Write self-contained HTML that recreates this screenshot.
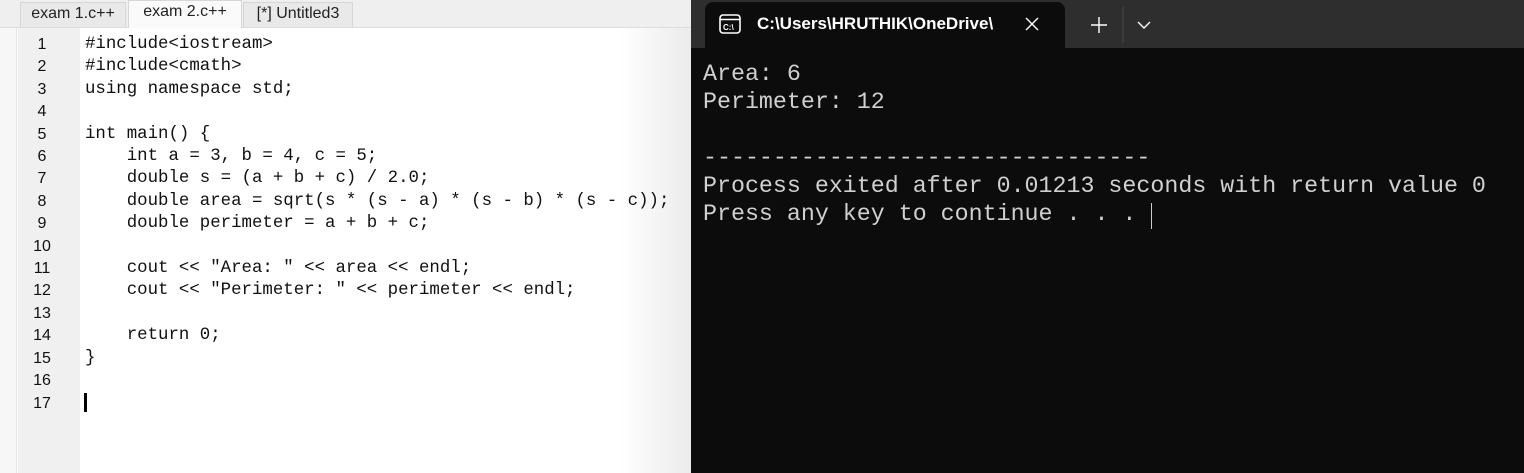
<!DOCTYPE html>
<html><head><style>
body{margin:0;width:1524px;height:473px;overflow:hidden;background:#fff;position:relative;font-family:"Liberation Sans",sans-serif}
.abs{position:absolute}
.tabs{left:0;top:0;width:691px;height:27px;background:#efefef;border-bottom:1px solid #ddd}
.tab{top:2px;height:24px;background:#e9e9e9;border:1px solid #d6d6d6;border-bottom:none;font-size:16px;color:#222;line-height:22px;text-align:center}
.gut{left:18px;top:28px;width:62px;height:445px;background:#f0f0f0}
.code{left:85px;top:34px;font-family:"Liberation Mono",monospace;font-size:17.4px;line-height:22.4px;white-space:pre;color:#111}
.term{left:691px;top:0;width:833px;height:473px;background:#0c0c0c}
.tbar{left:691px;top:0;width:833px;height:48px;background:#2e2e2e}
.ttab{left:705px;top:2px;width:360px;height:48px;background:#0c0c0c;border-radius:8px 8px 0 0}
.tout{left:703px;top:60px;font-family:"Liberation Mono",monospace;font-size:23.3px;line-height:28px;white-space:pre;color:#d0d0d0}
</style></head><body>
<div class="abs tabs"></div>
<div class="abs tab" style="left:20px;width:104px">exam 1.c++</div>
<div class="abs tab" style="left:128px;width:112px;top:0;height:27px;background:#fafafa">exam 2.c++</div>
<div class="abs tab" style="left:243px;width:108px">[*] Untitled3</div>
<div class="abs" style="left:0;top:28px;width:16px;height:445px;background:#f7f7f7;border-right:1px solid #e6e6e6"></div>
<div class="abs gut"></div>
<div class="abs" style="left:18px;top:34px;width:48px;font-size:16px;line-height:22.4px;text-align:center;color:#111">1<br>2<br>3<br>4<br>5<br>6<br>7<br>8<br>9<br>10<br>11<br>12<br>13<br>14<br>15<br>16<br>17</div>
<div class="abs code">#include&lt;iostream&gt;
#include&lt;cmath&gt;
using namespace std;

int main() {
    int a = 3, b = 4, c = 5;
    double s = (a + b + c) / 2.0;
    double area = sqrt(s * (s - a) * (s - b) * (s - c));
    double perimeter = a + b + c;

    cout &lt;&lt; "Area: " &lt;&lt; area &lt;&lt; endl;
    cout &lt;&lt; "Perimeter: " &lt;&lt; perimeter &lt;&lt; endl;

    return 0;
}

</div>
<div class="abs" style="left:84px;top:393px;width:3px;height:19px;background:#000"></div>
<div class="abs" style="left:620px;top:28px;width:71px;height:445px;background:linear-gradient(to right,rgba(0,0,0,0),rgba(0,0,0,0.08))"></div>
<div class="abs term"></div>
<div class="abs tbar"></div>
<div class="abs ttab"></div>
<svg class="abs" style="left:718px;top:12px" width="24" height="24" viewBox="0 0 24 24"><rect x="2" y="3" width="20" height="18" rx="3" fill="none" stroke="#fff" stroke-width="1.6"/><line x1="2" y1="7.5" x2="22" y2="7.5" stroke="#fff" stroke-width="1.4"/><text x="5" y="18" font-family="Liberation Sans" font-size="8" font-weight="bold" fill="#fff">C:\</text></svg>
<div class="abs" style="left:757px;top:14px;font-size:17px;font-weight:bold;color:#fff">C:\Users\HRUTHIK\OneDrive\</div>
<svg class="abs" style="left:1024px;top:16px" width="16" height="16"><path d="M2 2L14 14M14 2L2 14" stroke="#fff" stroke-width="1.4"/></svg>
<svg class="abs" style="left:1090px;top:16px" width="18" height="18"><path d="M9 1V17M1 9H17" stroke="#fff" stroke-width="1.4"/></svg>
<div class="abs" style="left:1122px;top:7px;width:2px;height:36px;background:#3c3c3c"></div>
<svg class="abs" style="left:1137px;top:20px" width="14" height="10"><path d="M1 2L7 8L13 2" fill="none" stroke="#fff" stroke-width="1.4"/></svg>
<div class="abs tout">Area: 6
Perimeter: 12

--------------------------------
Process exited after 0.01213 seconds with return value 0
Press any key to continue . . . </div>
<div class="abs" style="left:1151px;top:203px;width:1px;height:26px;background:#ccc"></div>
</body></html>
